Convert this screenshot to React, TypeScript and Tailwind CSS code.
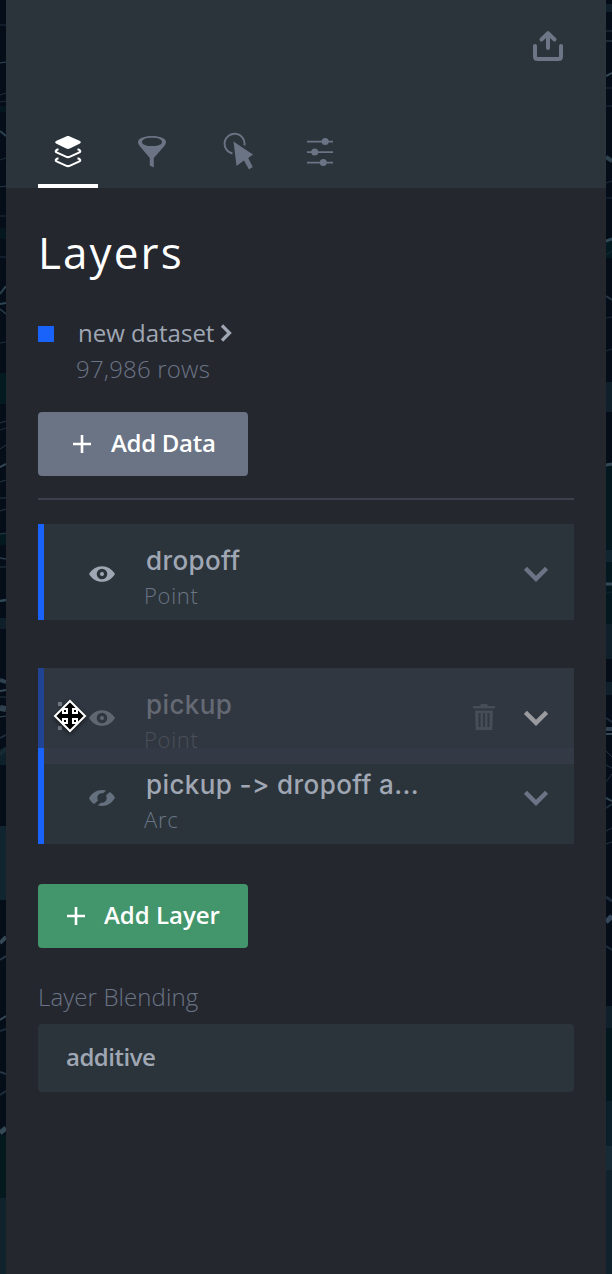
import type { ReactNode } from 'react';

type Band = [number, number, string];
type Road = [number, number, number, string];

const leftBands: Band[] = [
  [106, 6, '#04171f'], [228, 11, '#04171f'], [373, 31, '#031a20'], [533, 12, '#04181f'],
  [618, 11, '#10202b'], [749, 16, '#0e202a'], [826, 74, '#112530'], [1135, 63, '#04191e'], [1198, 76, '#10222c'],
];
const leftRoads: Road[] = [
  [25, 25, 1, '#1d2c3a'], [63, 62, 1, '#31485a'], [95, 93, 1, '#1d2c3a'], [102, 101, 1, '#1d2c3a'],
  [131, 136, 2, '#2c4350'], [160, 158, 1, '#1d2c3a'], [187, 186, 1, '#263b49'], [216, 216, 1, '#1d2c3a'],
  [257, 257, 1, '#1d2c3a'], [294, 286, 2, '#2a414e'], [304, 303, 2, '#2d4654'], [309, 314, 1.5, '#2a3d4b'],
  [343, 342, 1, '#1d2c3a'], [423, 421, 1, '#263543'], [430, 428, 1, '#1d2c3a'], [449, 445, 1, '#263543'],
  [467, 464, 2, '#344955'], [482, 480, 1, '#263543'], [498, 498, 1, '#263543'], [511, 509, 1, '#263543'],
  [534, 533, 1, '#263e48'], [558, 559, 1.5, '#2a3d4b'], [567, 567, 1, '#263543'], [601, 600, 2.5, '#2f4957'],
  [680, 682, 4, '#30424f'], [691, 690, 2, '#344955'], [697, 697, 1, '#263543'], [708, 709, 6, '#30424f'],
  [717, 716, 1, '#344955'], [738, 735, 2, '#1d2c3a'], [755, 748, 4, '#162a33'],
  [943, 937, 4, '#344955'], [960, 956, 2, '#263543'], [1020, 1016, 2, '#344955'], [1031, 1029, 2, '#1d2c3a'],
  [1072, 1074, 2, '#263543'], [1095, 1091, 2, '#1d2c3a'], [1133, 1128, 5, '#344955'],
];
const rightBands: Band[] = [
  [4, 8, '#10202b'], [241, 17, '#031a20'], [382, 30, '#10202b'], [465, 85, '#04181f'], [550, 12, '#10252f'],
  [562, 62, '#04181f'], [624, 35, '#10202b'], [682, 13, '#10202b'], [1006, 22, '#0f202a'],
  [1028, 73, '#03181e'], [1101, 45, '#0b202a'], [1146, 24, '#172b36'], [1170, 104, '#10222c'],
];
const rightRoads: Road[] = [
  [31, 31, 1, '#263543'], [41, 41, 1, '#344955'], [76, 73, 2, '#344955'], [88, 88, 1, '#1d2c3a'],
  [106, 106, 1, '#1d2c3a'], [157, 161, 4, '#2e414e'], [183, 181, 1, '#1d2c3a'], [198, 198, 1, '#1d2c3a'],
  [241, 239, 3, '#2f4855'], [255, 251, 1, '#1d2c3a'], [296, 300, 2, '#263543'], [318, 317, 1, '#1d2c3a'],
  [351, 349, 1, '#1d2c3a'], [465, 464, 3, '#344955'], [584, 584, 3, '#344955'], [593, 592, 1, '#10252f'],
  [718, 722, 2, '#1d2c3a'], [729, 729, 4, '#30424f'], [734, 734, 2, '#344955'], [751, 757, 1, '#263543'],
  [765, 768, 1, '#263543'], [782, 774, 1, '#263543'], [798, 801, 2, '#344955'], [808, 804, 2, '#1d2c3a'],
  [831, 828, 1, '#263543'], [844, 842, 1, '#263543'], [897, 901, 3, '#1d2c3a'], [922, 916, 5, '#34475a'], [946, 950, 2, '#1d2c3a'],
];

function MapStrip({ bands, roads }: { bands: Band[]; roads: Road[] }) {
  return (
    <svg className="h-[1274px] w-1.5 shrink-0 bg-[#050d19]" viewBox="0 0 6 1274" aria-hidden="true">
      {bands.map(([y, h, c]) => <rect key={y} y={y} width="6" height={h} fill={c} />)}
      {roads.map(([a, b, w, c]) => <path key={a} d={`M0 ${a}L6 ${b}`} stroke={c} strokeWidth={w} />)}
    </svg>
  );
}

function LayersIcon() {
  return (
    <svg className="block" width="30" height="34" viewBox="0 0 30 34">
      <path d="M15 1c.7 0 1.200.1 1.800.4L26.500 5.700c1.800.9 1.800 2.200 0 3.100L16.800 13.600c-1.200.6-2.400.6-3.600 0L3.500 8.800c-1.800-.9-1.800-2.200 0-3.100L13.200 1.400C13.800 1.100 14.300 1 15 1z" fill="#fff" />
      <path d="M5.500 14.300c-3 .7-3.600 2.300-1.400 3.300l8.800 4c1.500.7 2.700.7 4.200 0l8.800-4c2.200-1 1.600-2.600-1.400-3.300M5.500 23.300c-3 .7-3.600 2.300-1.400 3.300l8.800 4c1.500.7 2.700.7 4.200 0l8.800-4c2.200-1 1.600-2.600-1.400-3.300" fill="none" stroke="#fff" strokeWidth="2.100" />
    </svg>
  );
}

function FilterIcon() {
  return (
    <svg className="block" width="30" height="34" viewBox="0 0 30 34" fill="#6a7485">
      <path fillRule="evenodd" d="M15 1C7 1 1 3.400 1 7c0 1.900 1 3.200 2.500 5L12.800 23v7.500l4 2V23L26.500 12C28 10.200 29 8.900 29 7 29 3.400 23 1 15 1zm0 1.700c5.800 0 10 1.500 10 4.200s-4.200 4.200-10 4.200S5 9.600 5 6.900s4.200-4.200 10-4.200z" />
    </svg>
  );
}

function PointerIcon() {
  return (
    <svg className="block" width="32" height="40" viewBox="0 0 32 40">
      <path d="M9.500 21.500A10 10 0 1 1 21.400 13.500" fill="none" stroke="#6a7485" strokeWidth="1.900" />
      <path d="M10.500 9.500L30 22.500 25.200 26 29.700 35 26 37.500 21 28.500 13.500 34z" fill="#6a7485" />
    </svg>
  );
}

function SettingsIcon() {
  return (
    <svg className="block" width="28" height="30" viewBox="0 0 28 30" fill="#6a7485">
      <path d="M1 3.800h26v1.700H1zM1 14.200h26v1.700H1zM1 24.800h26v1.700H1z" />
      <circle cx="19.200" cy="4.600" r="3.500" /><circle cx="8.700" cy="15.100" r="3.500" /><circle cx="17.300" cy="25.600" r="3.500" />
    </svg>
  );
}

function ShareIcon() {
  return (
    <svg className="block" width="32" height="32" viewBox="0 0 32 32" fill="none" stroke="#6c7687" strokeWidth="4" strokeLinecap="round" strokeLinejoin="round">
      <path d="M3 16V26.500Q3 29 5.500 29H26.500Q29 29 29 26.500V16M16 18V3.500M9.500 9.500L16 3.200l6.500 6.300" />
    </svg>
  );
}

function Eye({ hidden, dim }: { hidden?: boolean; dim?: boolean }) {
  if (hidden) {
    return (
      <svg className="block" width="28" height="20" viewBox="0 0 28 20" fill="#65707f">
        <path d="M1 10.200C4 5 8.500 2 14 2c1.600 0 2.900.2 4.200.6L15 5.300c-3-.5-5.700 1.700-5.700 4.700 0 1 .3 1.800.7 2.500L6.200 16C4 14.600 2.200 12.700 1 10.200z" />
        <path d="M21.800 3.900c2.200 1.400 4 3.400 5.200 5.900-3 5.200-7.500 8.200-13 8.200-1.600 0-3-.2-4.300-.7l3.300-2.600c3 .5 5.700-1.700 5.700-4.700 0-.9-.3-1.800-.7-2.500z" />
      </svg>
    );
  }
  return (
    <svg className={dim ? 'block text-[#60666f]' : 'block text-[#a0a7b4]'} width="28" height="18" viewBox="0 0 28 18" fill="currentColor">
      <path fillRule="evenodd" d="M1 9C4 4 8.500 1.200 14 1.200S24 4 27 9c-3 5-7.500 7.800-13 7.800S4 14 1 9zm13-5.300A5.300 5.300 0 1 0 14 14.300 5.300 5.300 0 0 0 14 3.700z" />
      <circle cx="14" cy="9" r="2" />
    </svg>
  );
}

function Chevron({ lit }: { lit?: boolean }) {
  return (
    <svg className={lit ? 'block text-[#999b9f]' : 'block text-[#6a7485]'} width="24" height="16" viewBox="0 0 24 16">
      <path d="M1.400 2.400L12 12.800 22.600 2.400" fill="none" stroke="currentColor" strokeWidth="4.400" />
    </svg>
  );
}

function Trash() {
  return (
    <svg className="-mt-0.5 block" width="24" height="28" viewBox="0 0 24 28" fill="#474c57">
      <path d="M1 3h7l1-2h6l1 2h7v2.600H1z" />
      <path fillRule="evenodd" d="M3 7.500h18l-.7 19.500H3.700zM6.600 10v14h1.900V10zm4.500 0v14h1.800V10zm4.400 0v14h1.900V10z" />
    </svg>
  );
}

function MoveCursor() {
  return (
    <svg className="absolute left-[9px] top-[31px] drop-shadow-[0_2px_2px_rgba(0,0,0,0.5)]" width="34" height="34" viewBox="0 0 34 34">
      <path d="M17 2L32 17 17 32 2 17z" fill="#000" stroke="#fff" strokeWidth="2" />
      <path d="M10 10h4v4h-4zM20 10h4v4h-4zM10 20h4v4h-4zM20 20h4v4h-4z" fill="#000" stroke="#fff" strokeWidth="2" />
    </svg>
  );
}

function Plus() {
  return (
    <svg className="block shrink-0" width="18" height="18" viewBox="0 0 18 18">
      <path d="M9 0v18M0 9h18" stroke="#fff" strokeWidth="2.600" />
    </svg>
  );
}

interface RowProps {
  name: string;
  type: string;
  hidden?: boolean;
  dragged?: boolean;
  nameClass: string;
  typeClass: string;
  className: string;
  children?: ReactNode;
}

function LayerRow({ name, type, hidden, dragged, nameClass, typeClass, className, children }: RowProps) {
  return (
    <div className={`relative flex h-24 border-l-[6px] ${className}`}>
      <div className="flex w-[100px] shrink-0 items-center pl-11 pt-1"><Eye hidden={hidden} dim={dragged} /></div>
      <div className="flex-1 whitespace-nowrap pt-[21px]">
        <div className={`pl-0.5 font-['Inter',sans-serif] text-[26px] font-medium leading-8 ${nameClass}`}>{name}</div>
        <div className={`mt-0.5 text-[22px] font-[350] leading-8 ${typeClass}`}>{type}</div>
      </div>
      <div className="flex items-center gap-7 pr-[26px] pt-[3px]">
        {dragged && <Trash />}
        <Chevron lit={dragged} />
      </div>
      {children}
    </div>
  );
}

export default function App() {
  return (
    <div className="flex h-[1274px] w-[612px] overflow-hidden bg-[#050d19] font-['Open_Sans',sans-serif]">
      <MapStrip bands={leftBands} roads={leftRoads} />
      <main className="flex w-[600px] flex-col bg-[#25272f]">
        <header className="flex h-[188px] shrink-0 flex-col justify-between bg-[#2b343a] px-8">
          <div className="flex justify-end pr-[10px] pt-[30px]"><ShareIcon /></div>
          <nav className="flex h-[60px] gap-6">
            <div className="flex w-[60px] justify-center border-b-4 border-white pt-[7px]"><LayersIcon /></div>
            <div className="flex w-[60px] justify-center pt-[7px]"><FilterIcon /></div>
            <div className="flex w-[60px] justify-center pl-1.5 pt-1"><PointerIcon /></div>
            <div className="flex w-[60px] justify-center pt-[9px]"><SettingsIcon /></div>
          </nav>
        </header>
        <section className="flex flex-col px-8">
          <h1 className="mt-[34px] h-[60px] text-[44px] leading-[60px] tracking-[2.100px] text-white">Layers</h1>
          <div className="mt-[33px] flex h-9 items-center">
            <span className="mt-0.5 h-4 w-4 bg-[#1963fa]" />
            <span className="ml-6 text-[24px] leading-9 text-[#a0a7b4]">new dataset</span>
            <svg className="ml-1.5 block" width="13" height="18" viewBox="0 0 13 18">
              <path d="M2 1.500L9.500 9 2 16.500" fill="none" stroke="#a0a7b4" strokeWidth="3.200" />
            </svg>
          </div>
          <div className="h-9 pl-[38px] text-[24px] font-[350] leading-9 tracking-[0.200px] text-[#6a7485]">97,986 rows</div>
          <button className="mt-[25px] flex h-16 w-[210px] items-center rounded-[4px] bg-[#6a7485] pl-[35px]">
            <Plus />
            <span className="-mt-0.5 ml-5 whitespace-nowrap text-[24px] font-semibold tracking-[-0.300px] text-white">Add Data</span>
          </button>
          <div className="mt-[22px] h-0.5 bg-[#3a414c]" />
          <LayerRow name="dropoff" type="Point" className="mt-6 border-[#1963fa] bg-[#2b343a]" nameClass="text-[#a0a7b4] tracking-[0.400px]" typeClass="text-[#6a7485] tracking-[0.700px]" />
          <LayerRow name="pickup" type="Point" dragged className="mt-12 border-[#204493] bg-[#303740]" nameClass="text-[#646974] tracking-[0.400px]" typeClass="text-[#4a505c] tracking-[0.700px]">
            <span className="absolute left-[14px] top-[34px] h-1 w-1 bg-[#717780]" />
            <span className="absolute left-[14px] top-[58px] h-1 w-1 bg-[#717780]" />
            <MoveCursor />
          </LayerRow>
          <LayerRow name="pickup -> dropoff a..." type="Arc" hidden className="-mt-4 border-[#1963fa] bg-[linear-gradient(#333a45_16px,#2b343a_16px)]" nameClass="text-[#a0a7b4] tracking-[0.400px]" typeClass="text-[#6a7485] tracking-[0.700px]" />
          <button className="mt-10 flex h-16 w-[210px] items-center rounded-[4px] bg-[#43956b] pl-[29px]">
            <Plus />
            <span className="-mt-0.5 ml-[19px] whitespace-nowrap text-[24px] font-semibold text-white">Add Layer</span>
          </button>
          <div className="mt-[31px] h-9 text-[24px] font-[350] leading-9 tracking-[0.100px] text-[#6a7485]">Layer Blending</div>
          <div className="mt-[9px] flex h-[68px] items-center rounded-[4px] bg-[#2b343a] pb-0.5 pl-7 text-[24px] font-semibold tracking-[-0.500px] text-[#a0a7b4]">additive</div>
        </section>
      </main>
      <MapStrip bands={rightBands} roads={rightRoads} />
    </div>
  );
}
